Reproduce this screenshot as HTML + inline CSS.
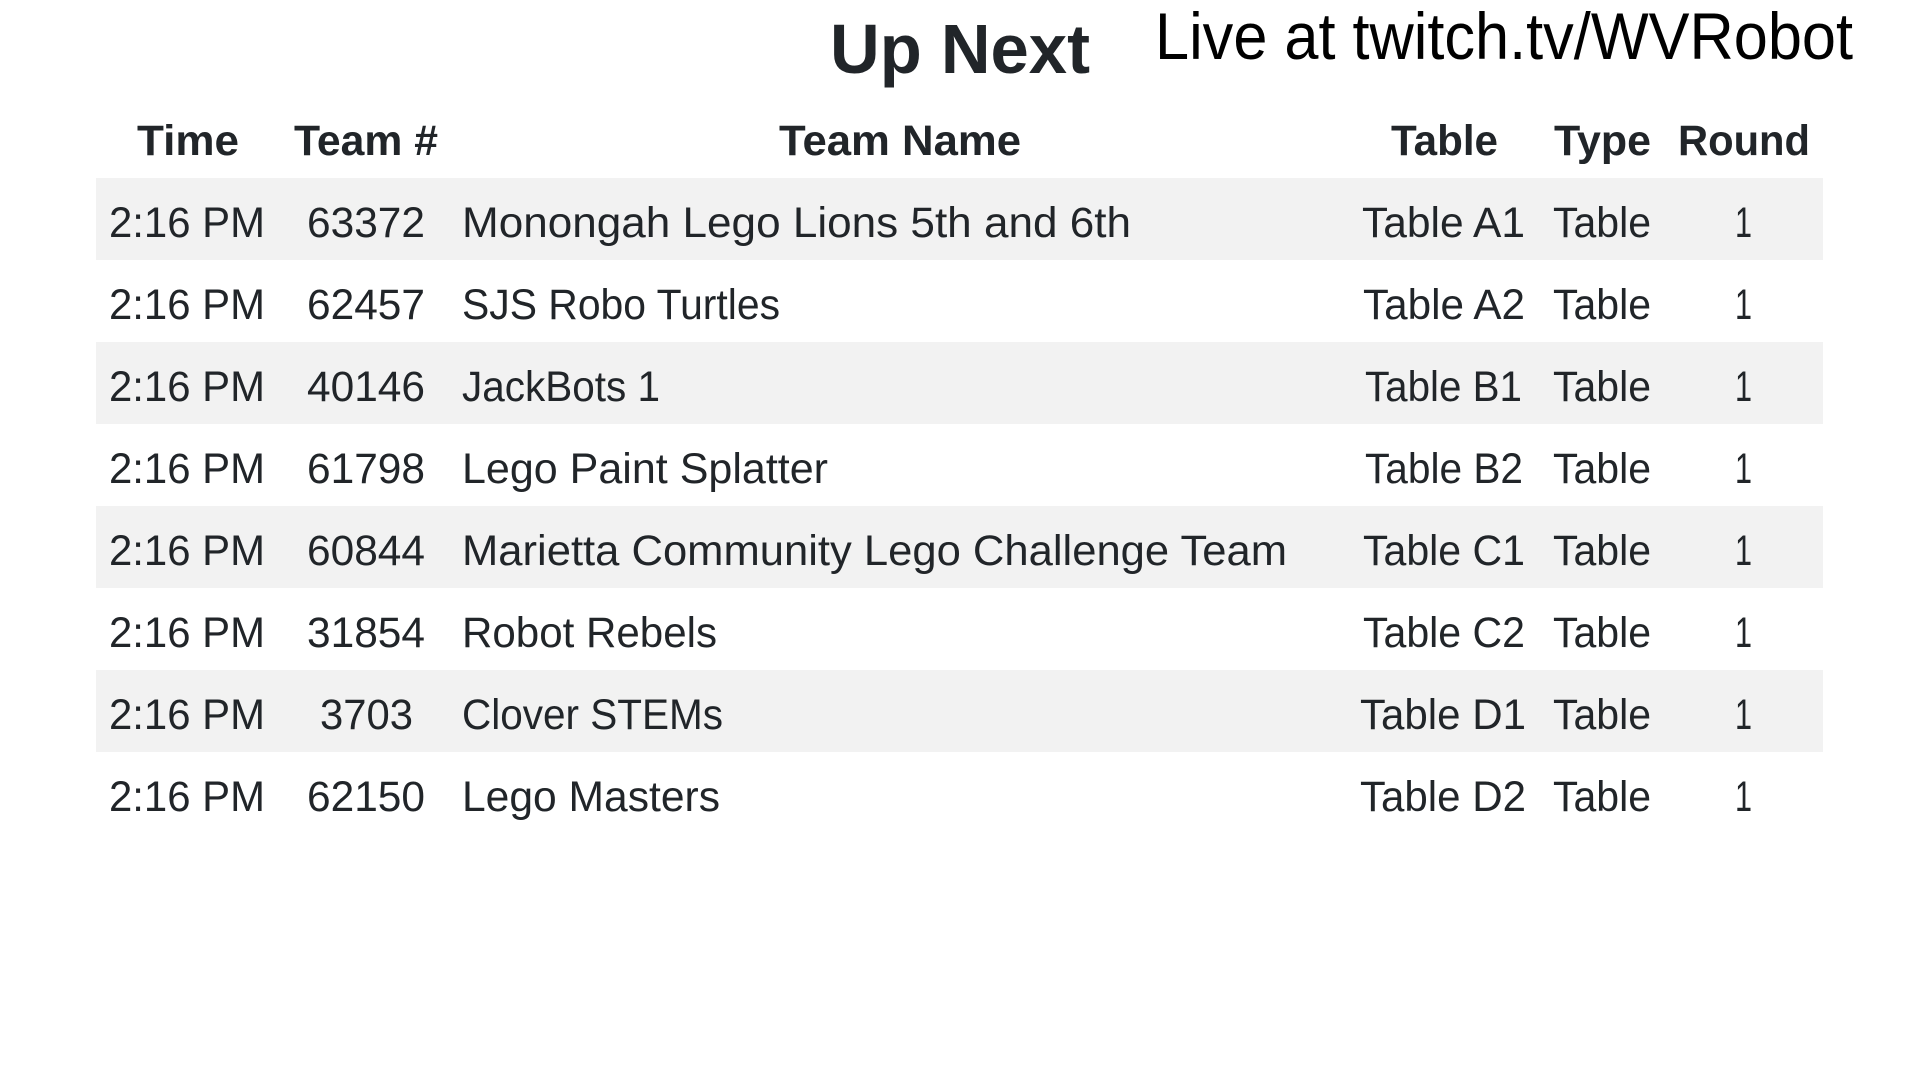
<!DOCTYPE html>
<html><head><meta charset="utf-8"><style>
html,body{margin:0;padding:0;background:#fff;width:1920px;height:1080px;overflow:hidden}
svg{display:block}
text{font-family:"Liberation Sans",sans-serif;fill:#212529}
.h{font-weight:bold;font-size:43px}
.c{font-size:43px}
</style></head><body>
<svg width="1920" height="1080" viewBox="0 0 1920 1080">
<rect x="96" y="178" width="1727" height="82" fill="#f2f2f2"/>
<rect x="96" y="342" width="1727" height="82" fill="#f2f2f2"/>
<rect x="96" y="506" width="1727" height="82" fill="#f2f2f2"/>
<rect x="96" y="670" width="1727" height="82" fill="#f2f2f2"/>
<text x="830" y="73" font-size="70" font-weight="bold" textLength="260" lengthAdjust="spacingAndGlyphs">Up Next</text>
<text x="1155" y="59" font-size="66" style="fill:#000" textLength="698" lengthAdjust="spacingAndGlyphs">Live at twitch.tv/WVRobot</text>
<text class="h" x="137" y="155" textLength="102" lengthAdjust="spacingAndGlyphs">Time</text>
<text class="h" x="294" y="155" textLength="144" lengthAdjust="spacingAndGlyphs">Team #</text>
<text class="h" x="779" y="155" textLength="242" lengthAdjust="spacingAndGlyphs">Team Name</text>
<text class="h" x="1391" y="155" textLength="107" lengthAdjust="spacingAndGlyphs">Table</text>
<text class="h" x="1554" y="155" textLength="97" lengthAdjust="spacingAndGlyphs">Type</text>
<text class="h" x="1678" y="155" textLength="132" lengthAdjust="spacingAndGlyphs">Round</text>

<g class="c">
<text class="c" x="109" y="237" textLength="156" lengthAdjust="spacingAndGlyphs">2:16 PM</text>
<text class="c" x="307" y="237" textLength="118" lengthAdjust="spacingAndGlyphs">63372</text>
<text class="c" x="462" y="237" textLength="669" lengthAdjust="spacingAndGlyphs">Monongah Lego Lions 5th and 6th</text>
<text class="c" x="1362" y="237" textLength="163" lengthAdjust="spacingAndGlyphs">Table A1</text>
<text class="c" x="1553" y="237" textLength="98" lengthAdjust="spacingAndGlyphs">Table</text>
<text class="c" x="1735" y="237" textLength="17" lengthAdjust="spacingAndGlyphs">1</text>

<text class="c" x="109" y="319" textLength="156" lengthAdjust="spacingAndGlyphs">2:16 PM</text>
<text class="c" x="307" y="319" textLength="118" lengthAdjust="spacingAndGlyphs">62457</text>
<text class="c" x="462" y="319" textLength="318" lengthAdjust="spacingAndGlyphs">SJS Robo Turtles</text>
<text class="c" x="1363" y="319" textLength="162" lengthAdjust="spacingAndGlyphs">Table A2</text>
<text class="c" x="1553" y="319" textLength="98" lengthAdjust="spacingAndGlyphs">Table</text>
<text class="c" x="1735" y="319" textLength="17" lengthAdjust="spacingAndGlyphs">1</text>

<text class="c" x="109" y="401" textLength="156" lengthAdjust="spacingAndGlyphs">2:16 PM</text>
<text class="c" x="307" y="401" textLength="118" lengthAdjust="spacingAndGlyphs">40146</text>
<text class="c" x="462" y="401" textLength="198" lengthAdjust="spacingAndGlyphs">JackBots 1</text>
<text class="c" x="1365" y="401" textLength="157" lengthAdjust="spacingAndGlyphs">Table B1</text>
<text class="c" x="1553" y="401" textLength="98" lengthAdjust="spacingAndGlyphs">Table</text>
<text class="c" x="1735" y="401" textLength="17" lengthAdjust="spacingAndGlyphs">1</text>

<text class="c" x="109" y="483" textLength="156" lengthAdjust="spacingAndGlyphs">2:16 PM</text>
<text class="c" x="307" y="483" textLength="118" lengthAdjust="spacingAndGlyphs">61798</text>
<text class="c" x="462" y="483" textLength="366" lengthAdjust="spacingAndGlyphs">Lego Paint Splatter</text>
<text class="c" x="1365" y="483" textLength="158" lengthAdjust="spacingAndGlyphs">Table B2</text>
<text class="c" x="1553" y="483" textLength="98" lengthAdjust="spacingAndGlyphs">Table</text>
<text class="c" x="1735" y="483" textLength="17" lengthAdjust="spacingAndGlyphs">1</text>

<text class="c" x="109" y="565" textLength="156" lengthAdjust="spacingAndGlyphs">2:16 PM</text>
<text class="c" x="307" y="565" textLength="118" lengthAdjust="spacingAndGlyphs">60844</text>
<text class="c" x="462" y="565" textLength="825" lengthAdjust="spacingAndGlyphs">Marietta Community Lego Challenge Team</text>
<text class="c" x="1363" y="565" textLength="162" lengthAdjust="spacingAndGlyphs">Table C1</text>
<text class="c" x="1553" y="565" textLength="98" lengthAdjust="spacingAndGlyphs">Table</text>
<text class="c" x="1735" y="565" textLength="17" lengthAdjust="spacingAndGlyphs">1</text>

<text class="c" x="109" y="647" textLength="156" lengthAdjust="spacingAndGlyphs">2:16 PM</text>
<text class="c" x="307" y="647" textLength="118" lengthAdjust="spacingAndGlyphs">31854</text>
<text class="c" x="462" y="647" textLength="255" lengthAdjust="spacingAndGlyphs">Robot Rebels</text>
<text class="c" x="1363" y="647" textLength="162" lengthAdjust="spacingAndGlyphs">Table C2</text>
<text class="c" x="1553" y="647" textLength="98" lengthAdjust="spacingAndGlyphs">Table</text>
<text class="c" x="1735" y="647" textLength="17" lengthAdjust="spacingAndGlyphs">1</text>

<text class="c" x="109" y="729" textLength="156" lengthAdjust="spacingAndGlyphs">2:16 PM</text>
<text class="c" x="320" y="729" textLength="93" lengthAdjust="spacingAndGlyphs">3703</text>
<text class="c" x="462" y="729" textLength="261" lengthAdjust="spacingAndGlyphs">Clover STEMs</text>
<text class="c" x="1360" y="729" textLength="166" lengthAdjust="spacingAndGlyphs">Table D1</text>
<text class="c" x="1553" y="729" textLength="98" lengthAdjust="spacingAndGlyphs">Table</text>
<text class="c" x="1735" y="729" textLength="17" lengthAdjust="spacingAndGlyphs">1</text>

<text class="c" x="109" y="811" textLength="156" lengthAdjust="spacingAndGlyphs">2:16 PM</text>
<text class="c" x="307" y="811" textLength="118" lengthAdjust="spacingAndGlyphs">62150</text>
<text class="c" x="462" y="811" textLength="258" lengthAdjust="spacingAndGlyphs">Lego Masters</text>
<text class="c" x="1360" y="811" textLength="166" lengthAdjust="spacingAndGlyphs">Table D2</text>
<text class="c" x="1553" y="811" textLength="98" lengthAdjust="spacingAndGlyphs">Table</text>
<text class="c" x="1735" y="811" textLength="17" lengthAdjust="spacingAndGlyphs">1</text>
</g>
</svg>
</body></html>
